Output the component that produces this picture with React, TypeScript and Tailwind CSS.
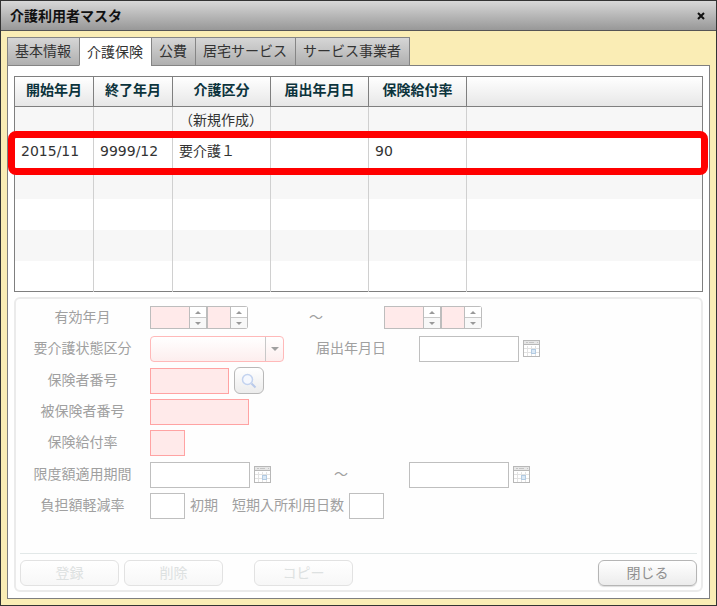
import { useState } from "react";
import type { ReactNode } from "react";

const tabs = ["基本情報", "介護保険", "公費", "居宅サービス", "サービス事業者"];

const columns = [
  { label: "開始年月", width: "w-[79px]" },
  { label: "終了年月", width: "w-[79px]" },
  { label: "介護区分", width: "w-[98px]" },
  { label: "届出年月日", width: "w-[98px]" },
  { label: "保険給付率", width: "w-[98px]" },
  { label: "", width: "" },
];

const rows = [
  ["", "", "（新規作成）", "", "", ""],
  ["2015/11", "9999/12", "要介護１", "", "90", ""],
  ["", "", "", "", "", ""],
  ["", "", "", "", "", ""],
  ["", "", "", "", "", ""],
  ["", "", "", "", "", ""],
];

const required = "h-[26px] border border-[#ffa3a3] bg-[#ffeaea] px-1 outline-none";
const optional = "h-[26px] border border-[#bfbfbf] bg-white px-1 outline-none";

const CalendarButton = ({ label }: { label: string }) => (
  <button type="button" aria-label={label} className="ml-1 h-[18px] w-[18px] shrink-0">
    <svg width="18" height="18" viewBox="0 0 18 18" fill="none">
      <rect x="1" y="1" width="15" height="16" fill="#fff" />
      <path d="M4.5 6v10M8.5 6v10M12.5 6v10M1 8.5h15M1 12.5h15" stroke="#e2e2e2" />
      <rect x="1" y="1" width="15" height="3" fill="#e6e6e6" />
      <path d="M3 2.5h2M6 2.5h5M14 2.5h1" stroke="#c4c4c4" />
      <path d="M1 4.5h15" stroke="#b8b8b8" />
      <rect x="0.5" y="0.5" width="16" height="16" stroke="#b8b8b8" />
      <rect x="8.5" y="9.5" width="4" height="4" fill="#dbe9f6" stroke="#b3cbe2" />
    </svg>
  </button>
);

const Spinner = ({ id, label, width }: { id?: string; label: string; width: string }) => (
  <div className="flex h-[23px]">
    <input id={id} aria-label={label} className={`${width} border border-r-0 border-[#bdbdbd] bg-[#ffeaea] px-1 outline-none`} />
    <div className="flex w-[18px] flex-col border border-[#bdbdbd] bg-[#f8f8f8]">
      <button type="button" aria-label={`${label}を増やす`} className="flex flex-1 items-center justify-center border-b border-[#c8c8c8] bg-white">
        <svg width="6" height="3" viewBox="0 0 6 3"><path d="M0 3L3 0L6 3z" fill="#999" /></svg>
      </button>
      <button type="button" aria-label={`${label}を減らす`} className="flex flex-1 items-center justify-center">
        <svg width="6" height="3" viewBox="0 0 6 3"><path d="M0 0L3 3L6 0z" fill="#999" /></svg>
      </button>
    </div>
  </div>
);

const YearMonth = ({ id, label }: { id?: string; label: string }) => (
  <div className="flex w-[98px] overflow-hidden rounded-r-[3px]">
    <Spinner id={id} label={`${label} 年`} width="w-[39px]" />
    <Spinner label={`${label} 月`} width="w-[23px]" />
  </div>
);

const Field = ({ id, label, children }: { id: string; label: string; children: ReactNode }) => (
  <div className="flex items-center">
    <label htmlFor={id} className="w-[125px] shrink-0 pb-0.5 text-center">
      {label}
    </label>
    <div className="ml-[5px] flex items-center">{children}</div>
  </div>
);

const ActionButton = ({ children, disabled = false }: { children: ReactNode; disabled?: boolean }) => (
  <button
    type="button"
    disabled={disabled}
    className="h-[26px] w-[99px] rounded-md border border-[#b5b5b5] bg-gradient-to-b from-white to-[#ececec] leading-5 text-[#8f8f8f] shadow-[0_1px_1px_#ddd] disabled:border-[#e2e2e2] disabled:to-[#f7f7f7] disabled:text-[#dde1e1] disabled:shadow-none"
  >
    {children}
  </button>
);

export default function App() {
  const [activeTab, setActiveTab] = useState("介護保険");

  return (
    <div className="flex min-h-screen flex-col border border-[#333] bg-[#faedb5] font-['DejaVu_Sans','Noto_Sans_CJK_JP',sans-serif] text-[14px] leading-5">
      <header className="flex h-[30px] items-center justify-between border-b border-[#555] bg-gradient-to-b from-[#d8d8d8] to-[#989898] pr-2.5 pl-[9px]">
        <h1 className="font-bold text-[#111]">介護利用者マスタ</h1>
        <button type="button" aria-label="閉じる" className="p-px">
          <svg width="8" height="8" viewBox="0 0 8 8" stroke="#111" strokeWidth="2">
            <path d="M1 1l6 6M7 1l-6 6" />
          </svg>
        </button>
      </header>

      <main className="flex flex-1 flex-col p-1.5">
        <div role="tablist" className="relative flex">
          {tabs.map((tab) => (
            <button
              key={tab}
              type="button"
              role="tab"
              aria-selected={tab === activeTab}
              onClick={() => setActiveTab(tab)}
              className="-mb-px h-[29px] border border-r-0 border-[#858585] bg-gradient-to-b from-[#d6d6d6] to-[#b0b0b0] pr-2 pb-0.5 pl-[7px] text-[#333] last:border-r aria-selected:border-b-white aria-selected:bg-white aria-selected:bg-none aria-selected:pb-0"
            >
              {tab}
            </button>
          ))}
        </div>

        <section className="flex flex-1 flex-col border border-[#7f7f7f] bg-white px-1.5 pt-2.5 pb-1.5">
          <div className="relative">
            <table className="h-[216px] w-full table-fixed border-collapse border border-[#7f7f7f] text-[#333]">
              <thead>
                <tr className="h-[30px] bg-gradient-to-b from-white to-[#e6e6e6]">
                  {columns.map((column, i) => (
                    <th key={i} className={`${column.width} border border-[#7f7f7f] p-0 pb-1 font-bold text-[#0b333c]`}>
                      {column.label}
                    </th>
                  ))}
                </tr>
              </thead>
              <tbody>
                {rows.map((row, i) => (
                  <tr key={i} className="h-[30px] odd:bg-[#f7f7f7]">
                    {row.map((cell, j) => (
                      <td key={j} className="border-x border-[#d0d0d0] pt-0 pr-0 pb-1 pl-1.5 whitespace-nowrap first:border-l-[#7f7f7f] last:border-r-[#7f7f7f]">
                        {cell}
                      </td>
                    ))}
                  </tr>
                ))}
              </tbody>
            </table>
            {/* Highlight around the selected record */}
            <div className="pointer-events-none absolute top-[55px] -right-[5px] -left-1.5 h-11 rounded-lg border-[7px] border-[#ff0000]"></div>
          </div>

          <form className="mt-[5px] flex flex-1 flex-col rounded-md border-2 border-[#ebebeb] bg-[#fefefe] px-1 pt-[3px] pb-1 text-[#a0a0a0]">
            <div className="grid h-[220px] grid-rows-7">
              <Field id="valid-year" label="有効年月">
                <YearMonth id="valid-year" label="有効開始" />
                <span className="w-[136px] pb-0.5 pl-[61px]">～</span>
                <YearMonth label="有効終了" />
              </Field>
              <Field id="care-level" label="要介護状態区分">
                <div className="relative">
                  <select id="care-level" className="h-[26px] w-[134px] appearance-none rounded-sm border border-[#ffb9b9] bg-gradient-to-b from-white to-[#fdeeee] px-1 outline-none">
                    <option value=""></option>
                  </select>
                  <span className="pointer-events-none absolute inset-y-px right-px flex w-[18px] items-center justify-center border-l border-[#c8c8c8]">
                    <svg width="8" height="4" viewBox="0 0 8 4"><path d="M0 0L4 4L8 0z" fill="#a0a0a0" /></svg>
                  </span>
                </div>
                <label htmlFor="notified-date" className="w-[135px] pb-0.5 pl-8">届出年月日</label>
                <input id="notified-date" className={`${optional} w-[100px]`} />
                <CalendarButton label="届出年月日を選択" />
              </Field>
              <Field id="insurer-number" label="保険者番号">
                <input id="insurer-number" className={`${required} w-[79px]`} />
                <button type="button" aria-label="保険者を検索" className="ml-[5px] flex h-[27px] w-[30px] items-center justify-center rounded-md border border-[#b8b8b8] bg-gradient-to-b from-white to-[#ececec]">
                  <svg width="16" height="16" viewBox="0 0 16 16" fill="none">
                    <circle cx="6.5" cy="6.5" r="5" fill="#f5f8fe" stroke="#c3d3ef" strokeWidth="1.5" />
                    <path d="M10.5 10.5L14.5 14.5" stroke="#b9caea" strokeWidth="2" />
                  </svg>
                </button>
              </Field>
              <Field id="insured-number" label="被保険者番号">
                <input id="insured-number" className={`${required} w-[99px]`} />
              </Field>
              <Field id="benefit-rate" label="保険給付率">
                <input id="benefit-rate" className={`${required} w-[35px]`} />
              </Field>
              <Field id="limit-start" label="限度額適用期間">
                <input id="limit-start" className={`${optional} w-[100px]`} />
                <CalendarButton label="適用開始日を選択" />
                <span className="w-[137px] pb-0.5 pl-[62px]">～</span>
                <input aria-label="限度額適用終了日" className={`${optional} w-[100px]`} />
                <CalendarButton label="適用終了日を選択" />
              </Field>
              <Field id="reduction-rate" label="負担額軽減率">
                <input id="reduction-rate" className={`${optional} w-[35px]`} />
                <label htmlFor="stay-days" className="px-[5px] pb-0.5 whitespace-pre">初期　短期入所利用日数</label>
                <input id="stay-days" className={`${optional} w-[35px]`} />
              </Field>
            </div>

            <div className="mt-auto flex border-t border-[#e2e8e8] pt-1.5">
              <ActionButton disabled>登録</ActionButton>
              <div className="ml-[5px]">
                <ActionButton disabled>削除</ActionButton>
              </div>
              <div className="ml-[31px]">
                <ActionButton disabled>コピー</ActionButton>
              </div>
              <div className="ml-auto">
                <ActionButton>閉じる</ActionButton>
              </div>
            </div>
          </form>
        </section>
      </main>
    </div>
  );
}
